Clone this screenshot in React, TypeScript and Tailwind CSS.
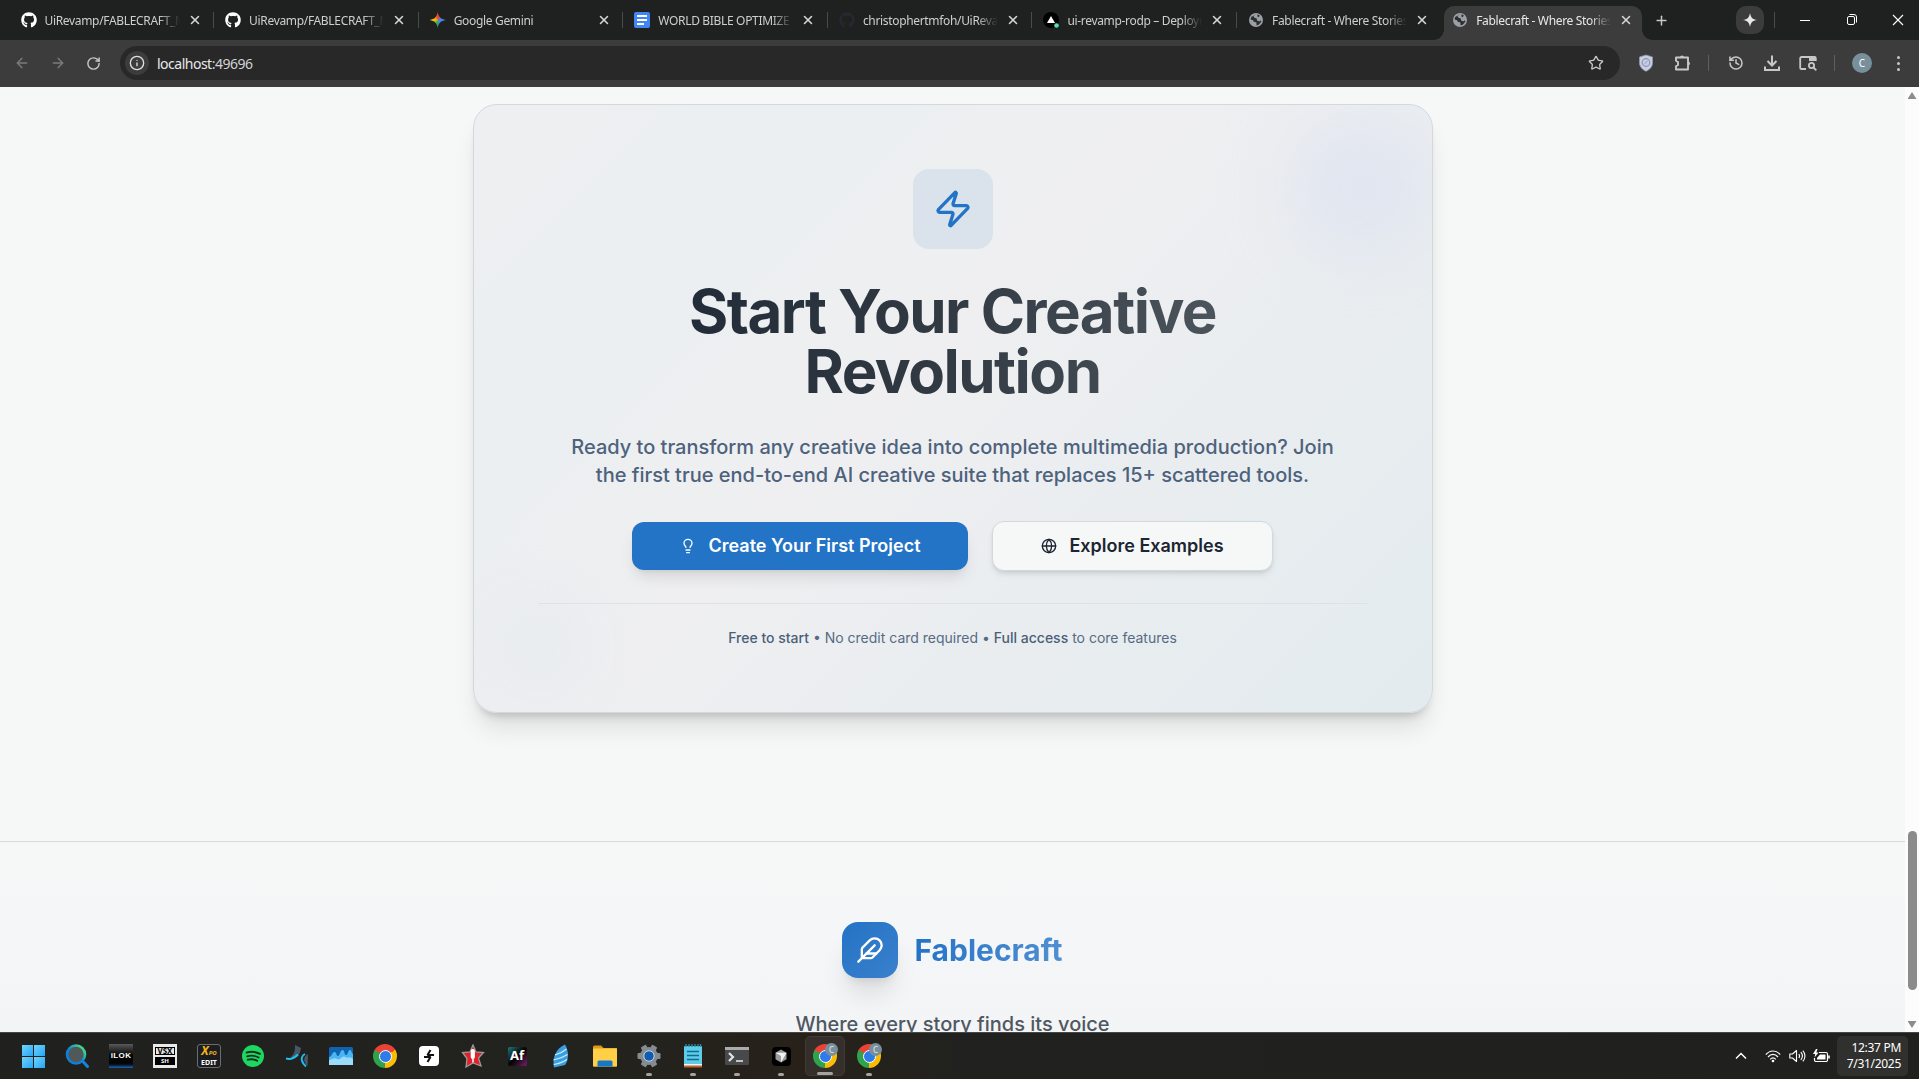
import React from "react";
import { Zap, Lightbulb, Globe, Feather, X, Plus, ArrowLeft, ArrowRight, RotateCw, Info, Star, History } from "lucide-react";
import { FaGithub } from "react-icons/fa";

function GlobeFav() {
  return (
    <svg viewBox="0 0 16 16" className="size-4">
      <circle cx="8" cy="8" r="7" fill="#9aa0a6" />
      <path d="M8.2 2.2 5.6 4 6 5.6 8.8 6.6 9 8.4 11.4 9.4 12.8 8.2 13.4 9.4 11 12.6 8.6 13.4 8.4 10.6 5.4 9.6 5.2 8.2 2.6 7.4 3.2 5Z" fill="#2b2d2e" />
      <path d="M9.6 2.3 11.8 3.4 10.6 5.2 9.4 4.4Z" fill="#2b2d2e" />
    </svg>
  );
}

function GeminiFav() {
  return (
    <div className="size-4 [clip-path:path('M8_0C8.8_4.8_11.2_7.2_16_8C11.2_8.8_8.8_11.2_8_16C7.2_11.2_4.8_8.8_0_8C4.8_7.2_7.2_4.8_8_0Z')] bg-[conic-gradient(from_0deg,#ea4335,#4285f4_25%,#4285f4_40%,#34a853_55%,#fbbc04_75%,#ea4335)]" />
  );
}

function DocsFav() {
  return (
    <div className="flex size-4 flex-col justify-center gap-[2px] rounded-[2px] bg-[#4285f4] pl-[3px]">
      <div className="h-[2px] w-[10px] bg-white" />
      <div className="h-[2px] w-[10px] bg-white" />
      <div className="h-[2px] w-[7px] bg-white" />
    </div>
  );
}

function VercelFav() {
  return (
    <svg viewBox="0 0 16 16" className="size-4">
      <circle cx="8" cy="8" r="8" fill="#000" />
      <path d="M8 4 12 11H4Z" fill="#fff" />
      <circle cx="13.5" cy="13.5" r="2.3" fill="#50e3c2" />
    </svg>
  );
}

const tabs = [
  { title: "UiRevamp/FABLECRAFT_MASTER", icon: <FaGithub className="size-4 text-white" /> },
  { title: "UiRevamp/FABLECRAFT_MASTER", icon: <FaGithub className="size-4 text-white" /> },
  { title: "Google Gemini", icon: <GeminiFav /> },
  { title: "WORLD BIBLE OPTIMIZE AND", icon: <DocsFav /> },
  { title: "christophertmfoh/UiRevamp", icon: <FaGithub className="size-4 text-[#24292f]" /> },
  { title: "ui-revamp-rodp – Deployment", icon: <VercelFav /> },
  { title: "Fablecraft - Where Stories Come", icon: <GlobeFav /> },
];

function TabBody({ title, icon }: { title: string; icon: React.ReactNode }) {
  return (
    <>
      {icon}
      <div className="ml-2 w-[135px] overflow-hidden pt-px text-[12px] tracking-[-0.33px] whitespace-nowrap [mask-image:linear-gradient(to_right,black_114px,transparent_135px)]">{title}</div>
      <X className="ml-[8px] size-[14px] shrink-0 text-[#d5d5d5]" strokeWidth={2.6} />
    </>
  );
}

function TabStrip() {
  return (
    <div className="flex h-10 shrink-0 items-start bg-[#1f2120] text-[#cdcecd]">
      <div className="w-[10.5px] shrink-0" />
      {tabs.map((t, i) => (
        <div key={i} className="flex h-10 w-[204.6px] shrink-0 items-center pl-[10px]">
          <TabBody {...t} />
          {i < 6 && <div className="ml-[11.500px] h-4 w-px bg-[#494b4a]" />}
        </div>
      ))}
      <div className="relative ml-[1px] mt-[6px] flex h-[34px] w-[198px] shrink-0 items-center rounded-t-[10px] bg-[#3c3c3c] pl-[8.500px] text-[#e8e8e8]">
        <div className="absolute bottom-0 -left-[10px] size-[10px] bg-[radial-gradient(circle_at_0_0,transparent_9.5px,#3c3c3c_10px)]" />
        <div className="absolute -right-[10px] bottom-0 size-[10px] bg-[radial-gradient(circle_at_100%_0,transparent_9.5px,#3c3c3c_10px)]" />
        <div className="-mt-[6px] flex items-center">
          <TabBody title="Fablecraft - Where Stories Come" icon={<GlobeFav />} />
        </div>
      </div>
      <div className="flex h-10 flex-1 items-center">
        <Plus className="ml-[12px] size-[15px] text-[#c7c7c7]" strokeWidth={2.4} />
        <div className="ml-[67px] flex h-7 w-7 items-center justify-center rounded-[10px] bg-[#3c3c3c]">
          <svg viewBox="0 0 14 14" className="size-[14px]"><path d="M7 0C7.7 4.4 9.6 6.3 14 7 9.6 7.7 7.7 9.6 7 14 6.3 9.6 4.4 7.7 0 7 4.4 6.3 6.3 4.4 7 0Z" fill="#e8e8e8" /></svg>
        </div>
        <div className="ml-[10px] h-4 w-px bg-[#494b4a]" />
        <div className="ml-[25px] h-px w-[10px] bg-white" />
        <svg viewBox="0 0 12 12" className="ml-[36px] size-3" fill="none" stroke="#fff"><rect x="1.5" y="2.5" width="7" height="8" rx="1.5" /><path d="M3.5 .5H8a2.5 2.5 0 0 1 2.500 2.500V8.500" /></svg>
        <svg viewBox="0 0 12 12" className="ml-[34px] size-3" stroke="#fff" strokeWidth="1.1"><path d="M1 1 11 11M11 1 1 11" /></svg>
      </div>
    </div>
  );
}

function Toolbar() {
  return (
    <div className="flex h-[47px] shrink-0 items-center bg-[#3c3c3c] pb-px text-[#c7c7c7]">
      <ArrowLeft className="ml-[14px] size-4 text-[#7c7c7c]" />
      <ArrowRight className="ml-[20px] size-4 text-[#7c7c7c]" />
      <RotateCw className="ml-[20px] size-[15px]" strokeWidth={2.3} />
      <div className="ml-[19px] flex h-[34px] w-[1500px] shrink-0 items-center rounded-full bg-[#282828]">
        <div className="ml-[5px] flex size-6 items-center justify-center rounded-full bg-[#3c3c3c]">
          <Info className="size-4 text-[#e0e0e0]" />
        </div>
        <div className="ml-2 text-[14px] tracking-[-0.5px] text-[#d2d2d2]"><span className="text-[#eaeaea]">localhost</span>:49696</div>
        <Star className="mr-[16px] ml-auto size-4" />
      </div>
      <svg viewBox="0 0 16 18" className="ml-[18px] h-[18px] w-4"><path d="M8 1 14.5 3V9C14.5 13 11 16 8 17.3 5 16 1.5 13 1.5 9V3Z" fill="#c9cde0" stroke="#8f95b5" strokeWidth=".8" /><circle cx="8" cy="8.5" r="3.8" fill="none" stroke="#8b93bd" strokeWidth="1.2" /><path d="M6.5 9.8 9.5 7" stroke="#8b93bd" /></svg>
      <svg viewBox="0 0 18 18" className="ml-[20px] size-[18px]" fill="none" stroke="currentColor" strokeWidth="1.9"><path d="M2 3.500H15V8H2" stroke="none" /><path d="M2 3.500H14V15.500H2V12.300L4 11V8L2 6.700Z" strokeLinejoin="round" /><path d="M6 3.500A2 2 0 0 1 10 3.500ZM14 7.500A2 2 0 0 1 14 11.500Z" fill="currentColor" stroke="none" /></svg>
      <div className="ml-[16px] h-4 w-px bg-[#5f5f5f]" />
      <History className="ml-[19px] size-4" strokeWidth={2.3} />
      <svg viewBox="0 0 18 18" className="ml-[19px] size-[18px]" fill="none" stroke="currentColor" strokeWidth="2"><path d="M9 1.500V11M4.500 7 9 11.500 13.500 7M2 12.500V16H16V12.500" /></svg>
      <svg viewBox="0 0 18 16" className="ml-[18px] h-4 w-[18px]" fill="none" stroke="currentColor" strokeWidth="1.8"><path d="M7 14H2.5A1.3 1.3 0 0 1 1.2 12.7V3.3A1.3 1.3 0 0 1 2.5 2H15.5A1.3 1.3 0 0 1 16.8 3.3V6" /><path d="M10 2H17V6H10Z" fill="currentColor" stroke="none" /><circle cx="12.5" cy="10.5" r="2.6" /><path d="M14.5 12.5 17.3 15.3" /></svg>
      <div className="ml-[17px] h-4 w-px bg-[#5f5f5f]" />
      <div className="ml-[17px] flex size-5 shrink-0 items-center justify-center rounded-full bg-[#78909c] text-[10px] text-white">C</div>
      <div className="ml-[24.500px] flex flex-col gap-[3px]">
        <div className="size-[3px] rounded-full bg-current" /><div className="size-[3px] rounded-full bg-current" /><div className="size-[3px] rounded-full bg-current" />
      </div>
    </div>
  );
}

function CtaCard() {
  return (
    <div className="relative mx-auto mt-[17px] w-[960px] shrink-0 overflow-hidden rounded-3xl border border-[#d0dade] bg-[linear-gradient(135deg,#eeeff1_0%,#ebeff1_22%,#efeff1_45%,#e9edf0_70%,#e3ebee_100%)] p-16 text-center">
      <div className="absolute top-4 right-2 size-32 rounded-full bg-[#d3dcf2]/50 blur-[36px]" />
      <div className="absolute bottom-4 left-4 size-24 rounded-full bg-[#e2eaee]/50 blur-[32px]" />
      <div className="relative">
        <div className="mx-auto flex size-20 items-center justify-center rounded-2xl bg-[#dae3ec]">
          <Zap className="size-10 text-[#2373c6]" />
        </div>
        <h2 className="mx-auto mt-8 w-[830px] bg-linear-to-r from-[#1a2433] via-[#323b43] to-[#5b646b] bg-clip-text text-6xl leading-none font-bold tracking-tight text-transparent">
          Start Your Creative<br />Revolution
        </h2>
        <p className="mt-8 text-xl leading-7 font-medium text-[#4d627c]">
          Ready to transform any creative idea into complete multimedia production? Join<br />
          the first true end-to-end AI creative suite that replaces 15+ scattered tools.
        </p>
        <div className="mt-8 flex items-center justify-center gap-6">
          <div className="flex h-12 w-[336px] items-center justify-center rounded-xl bg-[#2373c6] text-lg font-semibold text-white shadow-lg">
            <Lightbulb className="mr-[13px] size-4" />Create Your First Project
          </div>
          <div className="flex h-[50px] w-[281px] items-center justify-center rounded-xl border border-[#d0dade] bg-[#f6f8f8] text-lg font-semibold text-[#1c2532] shadow-md">
            <Globe className="mr-3 size-4" />Explore Examples
          </div>
        </div>
        <div className="mt-8 border-t border-[#dde2e5] pt-6 text-sm text-[#566b83]">
          <span className="font-medium text-[#4a6079]">Free to start</span> • No credit card required • <span className="font-medium text-[#4a6079]">Full access</span> to core features
        </div>
      </div>
    </div>
  );
}

function Page() {
  return (
    <div className="flex min-h-0 flex-1 font-[Inter,sans-serif]">
      <div className="flex w-[1905px] shrink-0 flex-col overflow-hidden bg-[#f6f8f8]">
        <div className="flex h-[754px] shrink-0 flex-col">
          <div className="mx-auto shrink-0"><CardShadow /></div>
        </div>
        <div className="h-[300px] shrink-0 border-t border-[#d3dbde] bg-linear-to-b from-[#f6f8f8] to-[#f0f2f5] pt-20">
          <div className="flex items-center justify-center gap-4">
            <div className="flex size-14 items-center justify-center rounded-2xl bg-linear-to-br from-[#2373c6] to-[#3a80cc] shadow-xl">
              <Feather className="size-7 text-white" />
            </div>
            <div className="bg-linear-to-r from-[#2373c6] to-[#4f8fd2] bg-clip-text text-3xl font-bold text-transparent">Fablecraft</div>
          </div>
          <div className="mt-8 text-center text-xl font-medium text-[#4f5761]">Where every story finds its voice</div>
        </div>
      </div>
      <div className="flex flex-1 flex-col items-center bg-[#fcfcfc]">
        <div className="mt-[5px] h-[7px] w-[9px] bg-[#8b8b8b] [clip-path:polygon(50%_0,100%_100%,0_100%)]" />
        <div className="mt-[732px] h-[159px] w-[9px] rounded-full bg-[#8b8b8b]" />
        <div className="mt-[31px] h-[7px] w-[9px] bg-[#8b8b8b] [clip-path:polygon(0_0,100%_0,50%_100%)]" />
      </div>
    </div>
  );
}

function CardShadow() {
  return (
    <div className="[&>div]:shadow-[0_20px_25px_-5px_rgb(0_0_0/0.1),0_8px_10px_-6px_rgb(0_0_0/0.2)]">
      <CtaCard />
    </div>
  );
}

function Chrome({ badge }: { badge?: boolean }) {
  return (
    <div className="relative">
      <div className="flex size-6 items-center justify-center rounded-full bg-[conic-gradient(from_-60deg,#ea4335_0_33.3%,#fbbc04_33.3%_66.6%,#2fa24c_66.6%)]">
        <div className="size-[13px] rounded-full border-[1.5px] border-white bg-[#2f7bea]" />
      </div>
      {badge && <div className="absolute -top-px -right-px flex size-[13px] items-center justify-center rounded-full bg-[#78909c] text-[8px] leading-none text-[#e6ecef]">C</div>}
    </div>
  );
}

const apps: { icon: React.ReactNode; run?: boolean; active?: boolean }[] = [
  { icon: <div className="grid size-[23px] grid-cols-2 gap-px">{[0, 1, 2, 3].map((i) => <div key={i} className="bg-linear-to-br from-[#6fd3fb] to-[#1da5f5]" />)}</div> },
  { icon: <svg viewBox="0 0 24 24" className="size-6" fill="none"><defs><linearGradient id="sg" x1="0" y1="1" x2="1" y2="0"><stop offset=".45" stopColor="#0f7fd8" /><stop offset=".85" stopColor="#3fd68a" /></linearGradient></defs><circle cx="11" cy="10.5" r="9" fill="#50585a" stroke="url(#sg)" strokeWidth="2.6" /><path d="M17.5 17 22.5 22.5" stroke="#1683dc" strokeWidth="3" strokeLinecap="round" /></svg> },
  { icon: <div className="flex size-6 items-center justify-center bg-linear-to-b from-[#5a5a5a] via-[#050505] to-[#050505] font-['Liberation_Sans',sans-serif] text-[8px] font-bold tracking-[0.4px] text-white shadow-[inset_0_-5px_3px_-3px_#1c66b8]">iLOK</div> },
  { icon: <div className="flex size-6 flex-col items-center justify-center gap-[2px] bg-[#e9e9e9]"><div className="w-5 border border-black text-center text-[8px] leading-[6px] font-bold text-black">VSX</div><div className="w-5 bg-black text-center text-[6px] leading-[8px] font-bold text-white">SH</div></div> },
  { icon: <div className="flex size-6 flex-col items-center justify-center rounded-[3px] border border-[#6b6d70] bg-[#1b1d20] leading-none"><div className="text-[12px] leading-[11px] font-bold text-[#f0b41c] italic">X<span className="text-[6px]">PO</span></div><div className="text-[7px] leading-[8px] font-bold text-white">EDIT</div></div> },
  { icon: <svg viewBox="0 0 24 24" className="size-6"><circle cx="12" cy="12" r="11" fill="#1ed760" /><path d="M5.5 8.6C10 7.3 15 7.7 19 9.9M6.2 12.3C10 11.2 14.2 11.6 17.6 13.5M6.8 15.7C10 14.8 13.3 15.1 16.2 16.8" fill="none" stroke="#12311f" strokeWidth="1.9" strokeLinecap="round" /></svg> },
  { icon: <svg viewBox="0 0 24 24" className="size-6"><path d="M10 1 16 4C15 9 14 12 9 15L6 13C10 9 10 6 10 1Z" fill="#46586a" /><path d="M1 14.500C6 16 10 13.500 13 10.500" stroke="#22c0ee" strokeWidth="2" fill="none" /><path d="M20 10C15 13 16 18 21 22.500" fill="none" stroke="#22b8ea" strokeWidth="2" /><path d="M23 10C18 13 18 18 22.500 22Z" fill="#46586a" /></svg> },
  { icon: <svg viewBox="0 0 24 18" className="h-[18px] w-6"><rect width="24" height="18" rx="1.5" fill="#0f63b0" /><path d="M0 10C3 10 3 5 5.500 5S7 9 9 9 11 3 13.500 3 15 8 17 8 19 3 21 3 22 6 24 7V18H0Z" fill="#49b6f3" /><path d="M0 13C3 13 5 10 8 12S13 8 16 10 21 9 24 12V18H0Z" fill="#9bdcfb" /></svg> },
  { icon: <Chrome /> },
  { icon: <div className="flex size-5 items-center justify-center rounded-[4px] bg-white"><svg viewBox="0 0 16 16" className="size-4" fill="none" stroke="#111" strokeWidth="2"><path d="M9.500 2 6.500 7H13M6.500 14 9.500 9H3" strokeLinejoin="bevel" /></svg></div> },
  { icon: <svg viewBox="0 0 24 24" className="size-6"><path d="M12 1 15 8 22.500 8.500 17.500 14 20 22 12 19 5 23 6 14.500 1.500 8.500 9 8Z" fill="#e0202b" stroke="#9a9a9a" strokeWidth="1.3" /><rect x="9.700" y="5" width="4.200" height="10" rx="2" fill="#fff" /><path d="M12 15V18.500" stroke="#fff" strokeWidth="1.5" /></svg> },
  { icon: <div className="flex size-[19px] items-center justify-center rounded-[2px] bg-linear-to-br from-[#157f83] via-[#050505] to-[#7a1c70] text-[13px] font-bold text-white">Af</div> },
  { icon: <svg viewBox="0 0 24 24" className="size-6"><path d="M16 .5C20 7 20 16 16 21L5 23.500C3 15 6 5 16 .5Z" fill="#3a9fe0" /><path d="M6 11C10 10 14 8 17.500 5M4.500 16C10 15 14 13.500 18.500 10.500M4.800 20.500C10 19.500 14 18.500 18 15.500" stroke="#d2ecfb" strokeWidth="1.100" fill="none" /></svg> },
  { icon: <svg viewBox="0 0 24 22" className="h-[22px] w-6"><path d="M0 2A1.500 1.500 0 0 1 1.500.5H8L10.500 3H24V21.500H0Z" fill="#e09a10" /><rect y="3.500" width="24" height="18" rx="1" fill="#ffcf48" /><path d="M4.500 21.500V17A1.500 1.500 0 0 1 6 15.500H18A1.500 1.500 0 0 1 19.500 17V21.500Z" fill="#1577c8" /></svg> },
  { run: true, icon: <svg viewBox="0 0 24 24" className="size-6"><g fill="#858b93"><circle cx="12" cy="12" r="9" />{[0, 60, 120].map((a) => <rect key={a} x="9" y="0.500" width="6" height="23" rx="1" transform={`rotate(${a + 30} 12 12)`} />)}</g><circle cx="12" cy="12" r="5.200" fill="#0e5db0" stroke="#cfd4da" strokeWidth="1" /></svg> },
  { run: true, icon: <svg viewBox="0 0 20 24" className="h-6 w-5"><rect x="1" y="2" width="18" height="21" rx="1" fill="#5ecbe8" /><rect x="1" y="21" width="18" height="2.500" fill="#c0672a" /><rect x="1" y="20" width="18" height="1.500" fill="#f4f4f4" /><path d="M4 7.500H16M4 11.500H16M4 15.500H16" stroke="#0d6d8c" strokeWidth="1.600" /><path d="M3 0V3M6 0V3M9 0V3M12 0V3M15 0V3M17.500 0V3" stroke="#2a8fb0" strokeWidth="1.300" /></svg> },
  { run: true, icon: <svg viewBox="0 0 24 18" className="h-[18px] w-6"><rect width="24" height="18" rx="1" fill="#48494b" /><rect width="24" height="3" fill="#a9abad" /><path d="M4 6 8 10 4 14" fill="none" stroke="#e3e3e3" strokeWidth="2.200" /><path d="M11 14H18" stroke="#e3e3e3" strokeWidth="1.600" /></svg> },
  { run: true, icon: <div className="flex size-[19px] items-center justify-center rounded-[4px] bg-black"><svg viewBox="0 0 14 14" className="size-[14px]"><path d="M7 .5 12.500 3.700V10.300L7 13.500 1.500 10.300V3.700Z" fill="#9a9a9a" /><path d="M1.500 3.700H12.500L7 13.500V7Z" fill="#f2f2f2" /></svg></div> },
  { run: true, active: true, icon: <Chrome badge /> },
  { run: true, icon: <Chrome badge /> },
];

function Taskbar() {
  return (
    <div className="flex h-[47px] shrink-0 items-center border-t border-[#464744] bg-[linear-gradient(to_right,#20211e,#22231f_30%,#272119_42%,#21221f_50%,#20211e)] text-white">
      <div className="w-[11px]" />
      {apps.map((a, i) => (
        <div key={i} className="flex w-11 justify-center">
          <div className={"relative flex size-10 items-center justify-center rounded-[5px] " + (a.active ? "border border-[#413a37] bg-[#352f2c]" : "")}>
            {a.icon}
            {a.run && <div className={"absolute bottom-0 h-[3px] rounded-full bg-[#a3a3a1] " + (a.active ? "w-4" : "w-[6px]")} />}
          </div>
        </div>
      ))}
      <svg viewBox="0 0 12 8" className="mr-[18px] ml-auto h-2 w-3" fill="none" stroke="#fff" strokeWidth="1.500"><path d="M1 6.500 6 1.500 11 6.500" /></svg>
      <svg viewBox="0 0 16 13" className="mr-[8px] h-[13px] w-4" fill="none" stroke="#fff" strokeWidth="1.200"><path d="M.8 4.600C5-.2 11-.2 15.200 4.600M3 7C6 3.600 10 3.600 13 7M5.200 9.300C7 7.300 9 7.300 10.800 9.300" /><circle cx="8" cy="11" r="1.300" fill="#fff" stroke="none" /></svg>
      <svg viewBox="0 0 17 14" className="mr-[7px] h-[14px] w-[17px]" fill="none" stroke="#fff" strokeWidth="1.100"><path d="M.8 5H3.500L7.500 1.500V12.500L3.500 9H.8ZM9.800 5C10.800 6.200 10.800 7.800 9.800 9M11.800 3.200C13.700 5.400 13.700 8.600 11.800 10.800M13.800 1.600C16.700 4.700 16.700 9.300 13.800 12.400" strokeLinejoin="round" /></svg>
      <svg viewBox="0 0 17 14" className="mr-[7px] h-[14px] w-[17px]" fill="none" stroke="#fff" strokeWidth="1.200"><path d="M6 3.500H13A1.500 1.500 0 0 1 14.500 5V11A1.500 1.500 0 0 1 13 12.500H3A1.500 1.500 0 0 1 1.500 11V9" /><path d="M7 5.500H12.500V10.500H4V9Z" fill="#fff" stroke="none" /><path d="M16 6.500V9.500" strokeWidth="1.600" /><path d="M3 0 0 5H2.300L1.500 8.500 5.500 3.500H3.300L4.500 0Z" fill="#fff" stroke="none" /></svg>
      <div className="mr-[11px] flex h-10 w-[71px] flex-col items-end justify-center rounded-[5px] bg-[#30312e] pr-[7px] text-[12px] leading-4 tracking-[-0.3px] whitespace-nowrap">
        <div>12:37 PM</div><div>7/31/2025</div>
      </div>
    </div>
  );
}

export default function App() {
  return (
    <div className="flex h-[1079px] w-[1919px] flex-col overflow-hidden bg-[#3c3c3c] font-['Noto_Sans',sans-serif]">
      <TabStrip />
      <Toolbar />
      <Page />
      <Taskbar />
    </div>
  );
}
